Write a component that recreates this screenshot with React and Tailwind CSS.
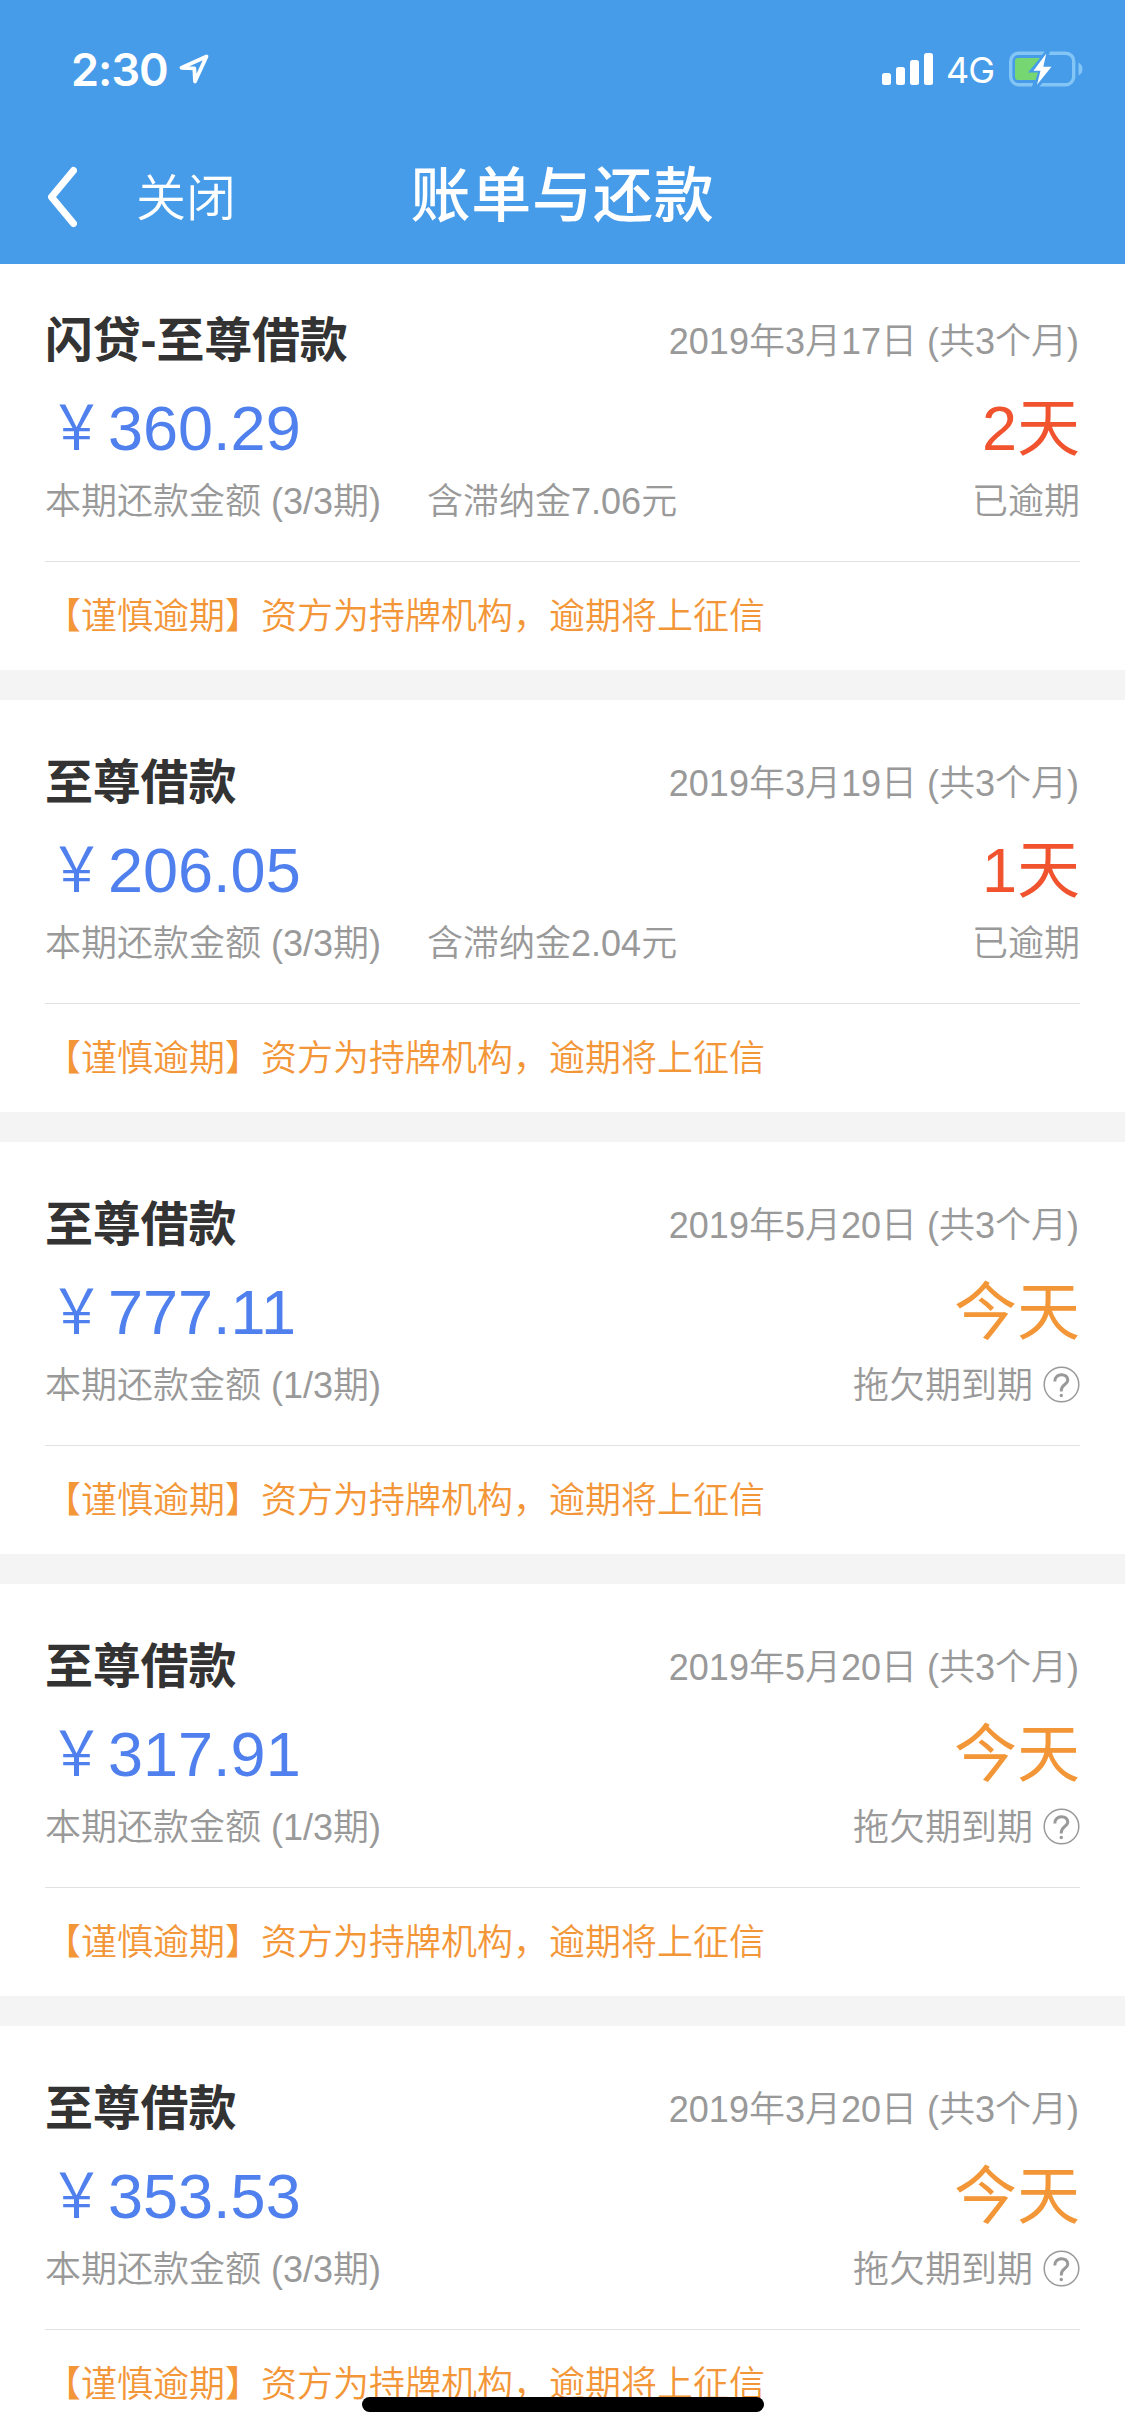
const bills = [
  { title: '闪贷-至尊借款', date: '2019年3月17日', amount: '360.29', term: '3/3期', fee: '7.06', status: '2天', overdue: true },
  { title: '至尊借款', date: '2019年3月19日', amount: '206.05', term: '3/3期', fee: '2.04', status: '1天', overdue: true },
  { title: '至尊借款', date: '2019年5月20日', amount: '777.11', term: '1/3期', status: '今天' },
  { title: '至尊借款', date: '2019年5月20日', amount: '317.91', term: '1/3期', status: '今天' },
  { title: '至尊借款', date: '2019年3月20日', amount: '353.53', term: '3/3期', status: '今天' },
];

function StatusBar() {
  return (
    <div className="flex h-[138px] items-center justify-between pl-[71px] pr-[43px] font-[Inter,sans-serif]">
      <div className="flex items-center">
        <span className="w-[101px] whitespace-nowrap text-[45px] leading-none font-semibold tracking-[-1px]">2:30</span>
        <svg className="ml-[6px] -mt-px" width="32" height="32" viewBox="0 0 32 32" fill="none" stroke="currentColor" strokeWidth="3.8" strokeLinejoin="round">
          <path d="M28.5 3.5 L3.5 14.8 L16.3 15.4 L17 28.500 Z" />
        </svg>
      </div>
      <div className="flex items-center">
        <svg width="52" height="32" viewBox="0 0 52 32" fill="currentColor">
          <rect x="0" y="20" width="9" height="12" rx="2.5" />
          <rect x="14" y="14" width="9" height="18" rx="2.5" />
          <rect x="28" y="7" width="9" height="25" rx="2.5" />
          <rect x="42" y="0" width="9" height="32" rx="2.5" />
        </svg>
        <span className="ml-[12px] w-[50px] whitespace-nowrap pt-[2px] text-[36px] leading-none tracking-[-1px]">4G</span>
        <svg className="ml-[13px] -mr-px" width="74" height="36" viewBox="0 0 74 36" fill="none">
          <rect x="1.7" y="2.2" width="63" height="31.5" rx="8" stroke="#83c5f5" strokeWidth="3.4" />
          <path d="M69.5 11.5 Q73.5 13.5 73.5 18 Q73.5 22.500 69.500 24.500 Z" fill="#83c5f5" />
          <path d="M38.500 -3 L19 22 H28 L22 38 L28.500 38 L47 15 H36.500 L42 -3 Z" fill="#479ce9" />
          <path d="M9 7 H31 L19 21.500 H29 L26.500 29 H9 Q6 29 6 26 V10 Q6 7 9 7 Z" fill="#76d672" />
          <path d="M37.300 2.500 L24.500 19.700 H31.500 L28 33.700 L42.500 15.800 H34.300 Z" fill="white" />
        </svg>
      </div>
    </div>
  );
}

function NavBar() {
  return (
    <div className="grid h-[126px] grid-cols-[1fr_auto_1fr] items-center pb-[8px]">
      <div className="flex items-center pl-[47px]">
        <svg width="30" height="62" viewBox="0 0 30 62" fill="none" stroke="currentColor" strokeWidth="7" strokeLinecap="round" strokeLinejoin="round">
          <path d="M26.500 4.500 L4.500 31 L26.500 57.500" />
        </svg>
        <span className="ml-[59px] pt-[4px] text-[50px] leading-none font-[350]">关闭</span>
      </div>
      <h1 className="text-[60px] leading-none font-medium tracking-[0.8px]">账单与还款</h1>
      <div />
    </div>
  );
}

function HelpIcon() {
  return (
    <svg className="ml-[10px] -mt-[3px]" width="37" height="37" viewBox="0 0 37 37" fill="none" stroke="currentColor">
      <circle cx="18.500" cy="18.500" r="17.300" strokeWidth="1.500" />
      <path d="M11.800 15.500 C11.800 6.500 25 6.800 24.800 14.300 C24.600 18.500 18.300 18.200 18.300 24.500 V25.500" strokeWidth="3" />
      <circle cx="18.300" cy="29.500" r="1.700" fill="currentColor" stroke="none" />
    </svg>
  );
}

function BillCard({ bill }) {
  return (
    <section className="mb-[30px] h-[412px] bg-white px-[45px] pt-[47px]">
      <div className="flex h-[72px] items-center justify-between">
        <h2 className="text-[48px] leading-none font-bold tracking-[-0.2px] text-[#333333]">{bill.title}</h2>
        <span className="pt-[2px] pr-px text-[36px] leading-none font-[350] text-[#999999]">{bill.date} (共3个月)</span>
      </div>
      <div className="flex h-[104px] items-center justify-between pb-[2px]">
        <span className="flex items-baseline text-[63px] leading-none text-[#4f80ee]">
          <span className="w-[63px] origin-center scale-x-[0.88] text-center text-[62px]">￥</span>
          {bill.amount}
        </span>
        <span className={bill.overdue ? 'text-[63px] leading-none text-[#f0532d]' : 'text-[63px] leading-none text-[#f39637]'}>{bill.status}</span>
      </div>
      <div className="flex h-[40px] items-center justify-between pt-[2px] text-[36px] leading-none font-[350] text-[#999999]">
        <div className="flex">
          <span>本期还款金额 ({bill.term})</span>
          {bill.fee && <span className="ml-[46px]">含滞纳金{bill.fee}元</span>}
        </div>
        <div className="flex items-center">
          <span>{bill.overdue ? '已逾期' : '拖欠期到期'}</span>
          {!bill.overdue && <HelpIcon />}
        </div>
      </div>
      <div className="mt-[40px] flex h-[109px] items-center border-t border-[#e2e2e2] pt-[2px] text-[36px] leading-none font-[350] text-[#f39637]">
        【谨慎逾期】资方为持牌机构，逾期将上征信
      </div>
    </section>
  );
}

export default function App() {
  return (
    <div className="relative h-[2436px] w-[1125px] overflow-hidden bg-[#f4f4f4] font-['Liberation_Sans','Noto_Sans_CJK_SC',sans-serif]" lang="zh-CN">
      <header className="relative z-10 h-[264px] bg-[#479ce9] text-white">
        <StatusBar />
        <NavBar />
      </header>
      <main className="-mt-[6px]">
        {bills.map((bill, i) => (
          <BillCard key={i} bill={bill} />
        ))}
      </main>
      <div className="absolute bottom-[24px] left-[362px] z-20 h-[15px] w-[402px] rounded-full bg-black" />
    </div>
  );
}
